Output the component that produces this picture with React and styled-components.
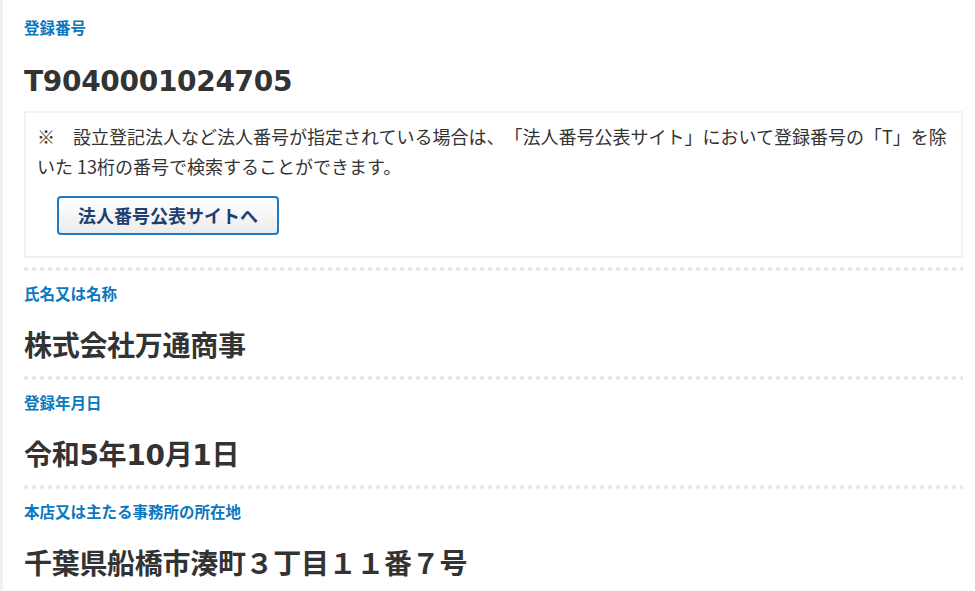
import React from 'react'
import styled, { createGlobalStyle } from 'styled-components'

const GlobalStyle = createGlobalStyle`
    html, body {
        margin: 0;
        padding: 0;
        background: #f2f2f2;
        font-family: "Noto Sans CJK JP", "DejaVu Sans", sans-serif;
        color: #333;
        text-spacing-trim: space-all;
    }
`

const Panel = styled.main`
    margin-left: 3px;
    min-height: 591px;
    background: #fff;
    padding: 17px 12px 0 21px;
    box-sizing: border-box;
`

const Section = styled.section`
    display: flex;
    flex-direction: column;
    padding-top: ${props => props.first ? '0' : '12px'};
    padding-bottom: 9px;
`

const Label = styled.h3`
    margin: 0;
    font-size: 15.5px;
    line-height: 20px;
    font-weight: 700;
    color: #0a78c0;
`

const Value = styled.p`
    margin: ${props => props.first ? '25px' : '24px'} 0 0;
    font-family: "DejaVu Sans", "Noto Sans CJK JP", sans-serif;
    font-size: 28px;
    line-height: 40px;
    font-weight: 700;
    color: #333;
    letter-spacing: -0.3px;
`

const NoteBox = styled.div`
    margin-top: 9px;
    margin-bottom: 0;
    border: 2px solid #f1f1f1;
    padding: 8px 4px 21px 11px;

    p {
        margin: 0;
        font-size: 18px;
        line-height: 30px;
        color: #333;
        text-spacing-trim: space-all;
    }
`

const SiteButton = styled.button`
    display: inline-block;
    margin: 15px 0 0 20px;
    padding: 0 19px;
    height: 39px;
    border: 2px solid #1b7bc4;
    border-radius: 4px;
    background: linear-gradient(#ffffff, #ececec);
    font-family: "Noto Sans CJK JP", sans-serif;
    font-size: 18px;
    font-weight: 700;
    line-height: 35px;
    color: #1d3f6f;
    cursor: pointer;
`

const Dots = styled.div`
    height: 4px;
    background-image: radial-gradient(circle at 2px 2px, #e6e6e6 1.8px, transparent 2.2px);
    background-size: 8px 4px;
    background-repeat: repeat-x;
`

const items = [
    { label: '氏名又は名称', value: '株式会社万通商事' },
    { label: '登録年月日', value: '令和5年10月1日' },
    { label: '本店又は主たる事務所の所在地', value: '千葉県船橋市湊町３丁目１１番７号' },
]

const App = () => {
    return (
        <>
            <GlobalStyle />
            <Panel>
                <Section first>
                    <Label>登録番号</Label>
                    <Value first>T9040001024705</Value>
                    <NoteBox>
                        <p>※　設立登記法人など法人番号が指定されている場合は、「法人番号公表サイト」において登録番号の「T」を除いた 13桁の番号で検索することができます。</p>
                        <SiteButton>法人番号公表サイトへ</SiteButton>
                    </NoteBox>
                </Section>
                {items.map((item) => (
                    <React.Fragment key={item.label}>
                        <Dots />
                        <Section>
                            <Label>{item.label}</Label>
                            <Value>{item.value}</Value>
                        </Section>
                    </React.Fragment>
                ))}
            </Panel>
        </>
    )
}

export default App
